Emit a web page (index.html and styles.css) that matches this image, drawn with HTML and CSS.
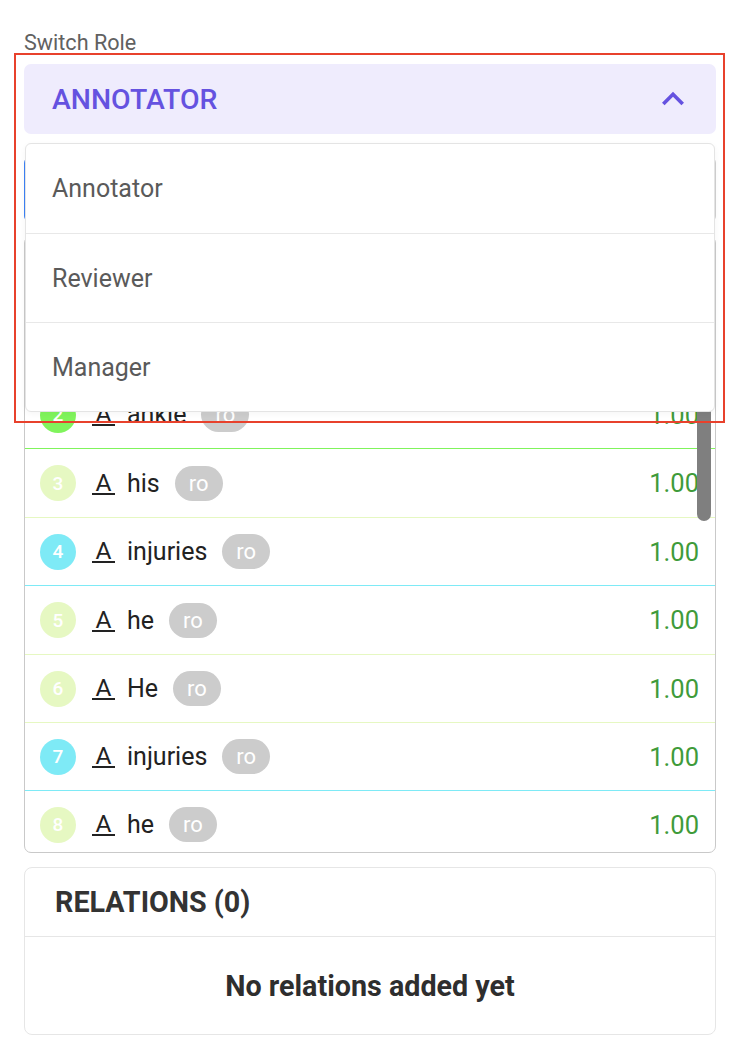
FILE: index.html
```html
<!DOCTYPE html>
<html lang="en">
<head>
<meta charset="utf-8">
<title>Switch Role</title>
<link rel="stylesheet" href="styles.css">
</head>
<body>
<div class="page">
  <div class="field-label">Switch Role</div>
  <div class="role-select">
    <button class="trigger" type="button">
      <span class="trigger-text">ANNOTATOR</span>
      <svg class="chevron" viewBox="0 0 24 24" width="44" height="44" aria-hidden="true"><path d="M12 8l-6 6 1.41 1.41L12 10.83l4.59 4.58L18 14z" fill="currentColor"/></svg>
    </button>
    <ul class="menu">
      <li class="menu-item">Annotator</li>
      <li class="menu-item">Reviewer</li>
      <li class="menu-item">Manager</li>
    </ul>
    <div class="highlight"></div>
  </div>

  <div class="tabs"><span class="tab active"></span><span class="tab"></span></div>

  <section class="entities">
    <div class="entities-head"></div>
    <div class="rows">
      <div class="row c-green"><span class="num"></span></div>
      <div class="row c-green"><span class="num">2</span><span class="glyph">A</span><span class="word">ankle</span><span class="pill">ro</span><span class="score">1.00</span></div>
      <div class="row c-lime tall"><span class="num">3</span><span class="glyph">A</span><span class="word">his</span><span class="pill">ro</span><span class="score">1.00</span></div>
      <div class="row c-cyan"><span class="num">4</span><span class="glyph">A</span><span class="word">injuries</span><span class="pill">ro</span><span class="score">1.00</span></div>
      <div class="row c-lime tall"><span class="num">5</span><span class="glyph">A</span><span class="word">he</span><span class="pill">ro</span><span class="score">1.00</span></div>
      <div class="row c-lime"><span class="num">6</span><span class="glyph">A</span><span class="word">He</span><span class="pill">ro</span><span class="score">1.00</span></div>
      <div class="row c-cyan"><span class="num">7</span><span class="glyph">A</span><span class="word">injuries</span><span class="pill">ro</span><span class="score">1.00</span></div>
      <div class="row c-lime"><span class="num">8</span><span class="glyph">A</span><span class="word">he</span><span class="pill">ro</span><span class="score">1.00</span></div>
    </div>
    <div class="thumb"></div>
  </section>

  <section class="relations">
    <div class="relations-head">RELATIONS (0)</div>
    <div class="relations-empty">No relations added yet</div>
  </section>
</div>
</body>
</html>
```

FILE: styles.css
```css
* { box-sizing: border-box; }

html, body {
  margin: 0;
  padding: 0;
  background: #ffffff;
}

body {
  font-family: Roboto, "Liberation Sans", Arial, sans-serif;
  color: #222222;
}

.page {
  padding: 31px 24px 0;
}

.field-label {
  font-size: 21.6px;
  line-height: 24px;
  color: #616161;
}

.role-select {
  position: relative;
  margin-top: 9px;
}

.trigger {
  display: flex;
  align-items: center;
  justify-content: space-between;
  width: 100%;
  height: 70px;
  padding: 0 21px 0 28px;
  border: 0;
  border-radius: 7px;
  background: #efecfd;
  color: #6552e0;
  font-family: inherit;
  cursor: pointer;
}

.trigger-text {
  font-size: 28.4px;
  font-weight: 500;
}

.chevron {
  display: block;
  color: #6552e0;
}

.menu {
  position: absolute;
  z-index: 5;
  left: 1px;
  right: 1px;
  top: calc(100% + 9px);
  margin: 0;
  padding: 0;
  list-style: none;
  background: #ffffff;
  border: 1px solid #e4e4e4;
  border-radius: 6px;
  box-shadow: 0 2px 6px rgba(0, 0, 0, 0.04);
}

.menu-item {
  display: flex;
  align-items: center;
  height: 89px;
  padding-left: 26px;
  font-size: 25px;
  color: #5a5a5a;
}

.menu-item + .menu-item {
  border-top: 1px solid #e8e8e8;
}

.highlight {
  position: absolute;
  z-index: 6;
  left: -10px;
  top: -11px;
  width: 711px;
  height: 370px;
  border: 2px solid #e8412c;
  pointer-events: none;
}

.tabs {
  display: flex;
  height: 65px;
  margin-top: 23px;
  border: 1px solid #d0d0d0;
  border-left-color: #3b82f6;
  border-radius: 6px;
}

.tab {
  flex: 1;
}

.entities {
  position: relative;
  height: 617px;
  margin-top: 14px;
  border: 1px solid #c9c9c9;
  border-radius: 7px;
  overflow: hidden;
  display: flex;
  flex-direction: column;
}

.entities-head {
  flex: none;
  height: 76px;
}

.rows {
  flex: 1;
  overflow: hidden;
}

.row {
  display: flex;
  align-items: center;
  height: 68px;
  padding: 0 16px 0 15px;
  border-bottom: 1px solid var(--c);
}

.row.tall {
  height: 69px;
}

.c-green { --c: #80f45c; }
.c-lime { --c: #e6f8c2; }
.c-cyan { --c: #7eeaf6; }

.num {
  flex: none;
  width: 36px;
  height: 36px;
  border-radius: 50%;
  background: var(--c);
  color: #ffffff;
  display: flex;
  align-items: center;
  justify-content: center;
  font-size: 19px;
  font-weight: 500;
}

.glyph {
  flex: none;
  width: 23px;
  margin-left: 16px;
  text-align: center;
  font-size: 24.5px;
  line-height: 21px;
  border-bottom: 2px solid #222222;
  color: #222222;
}

.word {
  margin-left: 12px;
  font-size: 25px;
  color: #222222;
}

.pill {
  margin-left: 15px;
  height: 35px;
  padding: 0 14px;
  border-radius: 18px;
  background: #cccccc;
  color: #ffffff;
  font-size: 22px;
  display: flex;
  align-items: center;
}

.score {
  margin-left: auto;
  font-size: 25.5px;
  color: #3f9b3a;
}

.thumb {
  position: absolute;
  right: 4px;
  top: 6px;
  width: 14px;
  height: 278px;
  border-radius: 7px;
  background: #7f7f7f;
}

.relations {
  margin-top: 14px;
  height: 168px;
  border: 1px solid #e6e6e6;
  border-radius: 8px;
  display: flex;
  flex-direction: column;
}

.relations-head {
  height: 69px;
  flex: none;
  display: flex;
  align-items: center;
  padding-left: 30px;
  border-bottom: 1px solid #e6e6e6;
  font-size: 28.7px;
  font-weight: 700;
  color: #333333;
}

.relations-empty {
  flex: 1;
  display: flex;
  align-items: center;
  justify-content: center;
  font-size: 28.7px;
  font-weight: 700;
  color: #2e2e2e;
}
```
